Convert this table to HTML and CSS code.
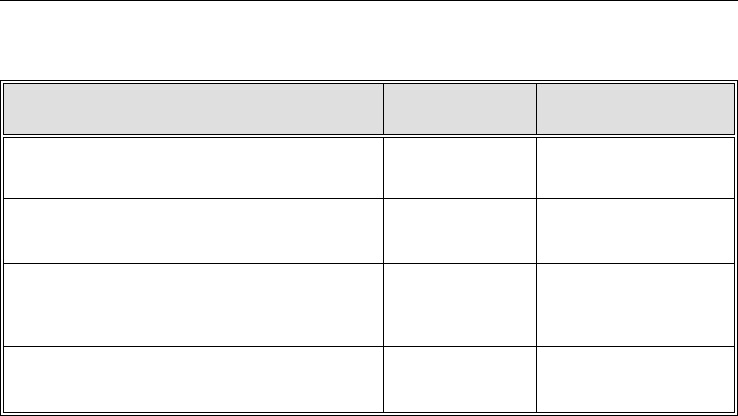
FILE: index.html
```html
<!DOCTYPE html>
<html>
<head>
<meta charset="utf-8">
<link rel="stylesheet" href="styles.css">
</head>
<body>
<div class="rule"></div>
<div class="frame">
  <div class="tbl head">
    <div class="row r-head"><div class="cell"></div><div class="cell"></div><div class="cell"></div></div>
  </div>
  <div class="tbl body">
    <div class="row r1"><div class="cell"></div><div class="cell"></div><div class="cell"></div></div>
    <div class="row r2"><div class="cell"></div><div class="cell"></div><div class="cell"></div></div>
    <div class="row r3"><div class="cell"></div><div class="cell"></div><div class="cell"></div></div>
    <div class="row r4"><div class="cell"></div><div class="cell"></div><div class="cell"></div></div>
  </div>
</div>
</body>
</html>
```

FILE: styles.css
```css
html, body {
  margin: 0;
  padding: 0;
  background: #fff;
  font-family: "Liberation Sans", Arial, sans-serif;
}
.rule {
  height: 1px;
  background: #000;
}
.frame {
  margin-top: 79px;
  width: 732px;
  border: 1px solid #000;
  padding: 2px;
  display: flex;
  flex-direction: column;
  gap: 2px;
}
.tbl {
  border: 1px solid #000;
}
.row {
  display: grid;
  grid-template-columns: 380px 153px 197px;
  box-sizing: border-box;
}
.cell {
  border-right: 1px solid #000;
}
.cell:last-child {
  border-right: none;
}
.head .row {
  background: #dfdfdf;
  height: 50px;
}
.body .row + .row {
  border-top: 1px solid #000;
}
.r1 { height: 60px; }
.r2 { height: 65px; }
.r3 { height: 83px; }
.r4 { height: 66px; }
```
